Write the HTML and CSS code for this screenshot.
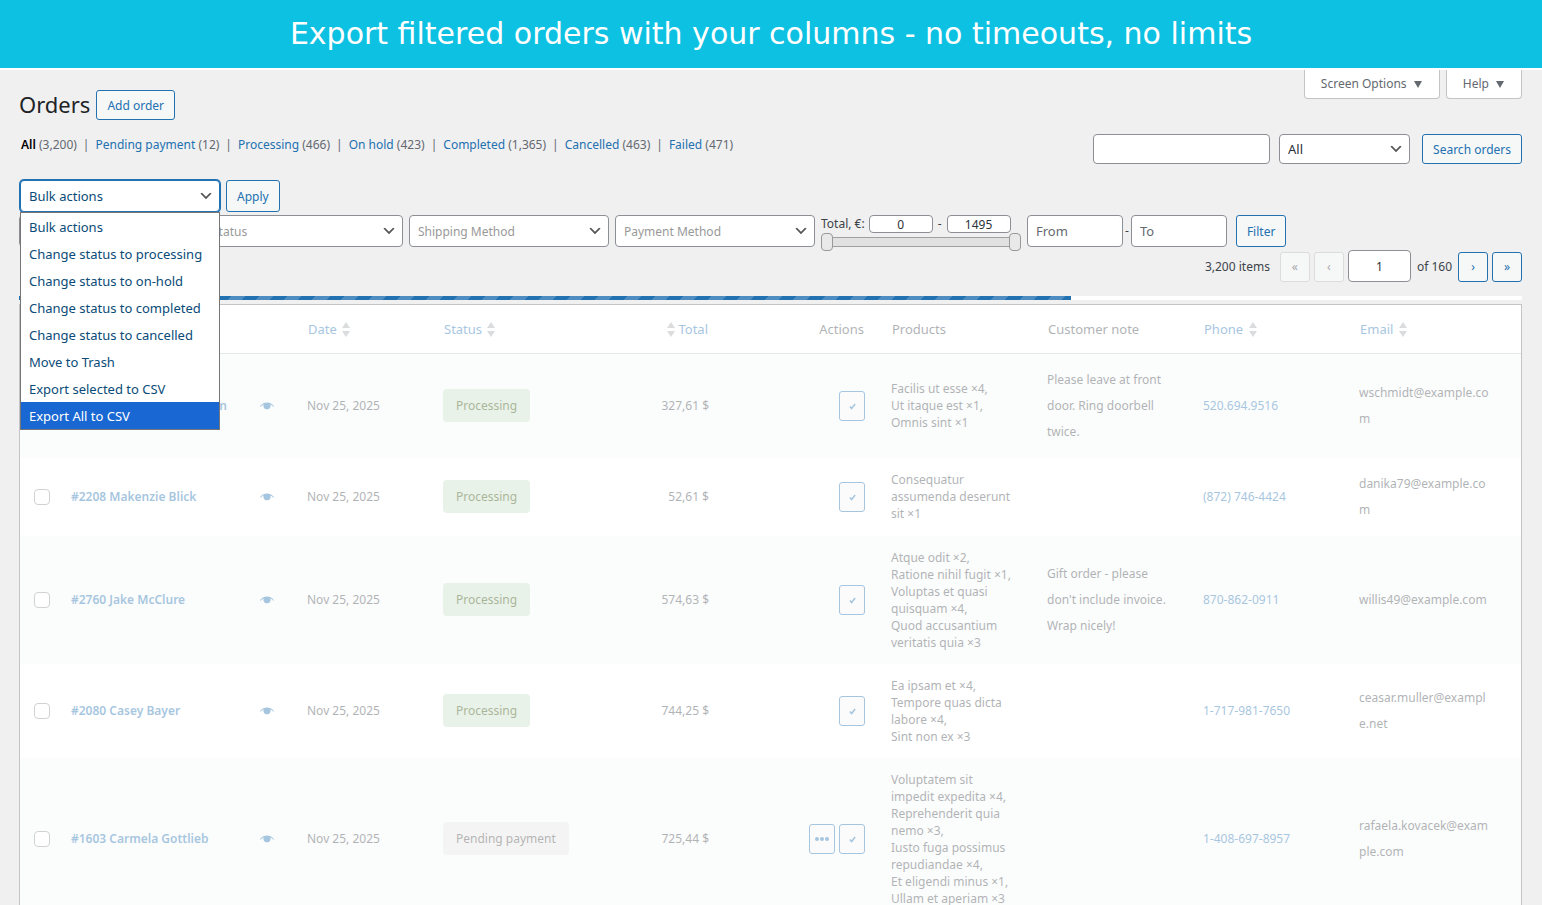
FILE: index.html
```html
<!DOCTYPE html>
<html lang="en">
<head>
    <meta charset="utf-8">
    <title>Orders</title>
    <link rel="stylesheet" href="styles.css">
</head>
<body>
    <svg class="sprite" aria-hidden="true">
        <symbol id="eye" viewBox="0 0 14 8">
            <path d="M0 4.200C2 1.400 4.600.4 7 .4s5 1 7 3.800l-.5.5C12.300 3.500 11.200 2.700 10.200 2.300A3.300 3.300 0 0 1 7 7.200 3.300 3.300 0 0 1 3.800 2.300C2.800 2.700 1.700 3.500.5 4.700z"/>
        </symbol>
        <symbol id="check" viewBox="0 0 8 8">
            <path d="M1 4l2 2.300L7 1.200" fill="none" stroke="currentColor" stroke-width="1.800"/>
        </symbol>
        <symbol id="dots" viewBox="0 0 14 4">
            <circle cx="2" cy="2" r="2"/><circle cx="7" cy="2" r="2"/><circle cx="12" cy="2" r="2"/>
        </symbol>
        <symbol id="sort" viewBox="0 0 8 15">
            <path d="M4 0l4 6H0zM0 9h8l-4 6z"/>
        </symbol>
    </svg>

    <div class="banner">Export filtered orders with your columns - no timeouts, no limits</div>

    <div class="wrap">
        <div class="header">
            <div class="title">
                <h1>Orders</h1>
                <a href="#" class="button">Add order</a>
            </div>
            <div class="screen-meta">
                <button class="meta-link">Screen Options <span class="caret"></span></button>
                <button class="meta-link">Help <span class="caret"></span></button>
            </div>
        </div>

        <div class="subheader">
            <ul class="views">
                <li><a href="#" class="current">All</a> (3,200)</li>
                <li><a href="#">Pending payment</a> (12)</li>
                <li><a href="#">Processing</a> (466)</li>
                <li><a href="#">On hold</a> (423)</li>
                <li><a href="#">Completed</a> (1,365)</li>
                <li><a href="#">Cancelled</a> (463)</li>
                <li><a href="#">Failed</a> (471)</li>
            </ul>
            <div class="search">
                <input type="search" class="search-input" aria-label="Search orders">
                <select class="search-filter" aria-label="Search in"><option>All</option></select>
                <button class="button">Search orders</button>
            </div>
        </div>

        <div class="bulk">
            <div class="bulk-select">
                <select class="open" aria-label="Bulk actions"><option>Bulk actions</option></select>
                <ul class="options" role="listbox">
                    <li role="option">Bulk actions</li>
                    <li role="option">Change status to processing</li>
                    <li role="option">Change status to on-hold</li>
                    <li role="option">Change status to completed</li>
                    <li role="option">Change status to cancelled</li>
                    <li role="option">Move to Trash</li>
                    <li role="option">Export selected to CSV</li>
                    <li role="option" class="selected" aria-selected="true">Export All to CSV</li>
                </ul>
            </div>
            <button class="button tall">Apply</button>
        </div>

        <div class="filters">
            <select class="date-filter" aria-label="Date"><option>All dates</option></select>
            <select class="filter" aria-label="Status"><option>Status</option></select>
            <select class="filter" aria-label="Shipping Method"><option>Shipping Method</option></select>
            <select class="filter" aria-label="Payment Method"><option>Payment Method</option></select>
            <div class="total-filter">
                <div class="total-values">
                    <label for="total-min">Total, €:</label>
                    <input type="text" id="total-min" value="0">
                    <span>-</span>
                    <input type="text" id="total-max" value="1495" aria-label="Maximum total">
                </div>
                <div class="slider">
                    <input type="range" min="0" max="1495" value="0" aria-label="Minimum">
                    <input type="range" min="0" max="1495" value="1495" aria-label="Maximum">
                </div>
            </div>
            <div class="date-range">
                <input type="text" placeholder="From" aria-label="From">
                <span>-</span>
                <input type="text" placeholder="To" aria-label="To">
            </div>
            <button class="button tall">Filter</button>
        </div>

        <div class="pagination">
            <span class="count">3,200 items</span>
            <button class="button page" disabled>«</button>
            <button class="button page" disabled>‹</button>
            <input type="text" class="current-page" value="1" aria-label="Current page">
            <span class="of">of 160</span>
            <button class="button page">›</button>
            <button class="button page">»</button>
        </div>

        <div class="progress"><div class="progress-bar" style="width: 70%"></div></div>

        <div class="table-box">
            <table class="orders">
                <colgroup>
                    <col class="c-check"><col><col class="c-small"><col class="c-wide"><col class="c-small">
                    <col class="c-wide"><col class="c-wide"><col class="c-wide"><col class="c-wide"><col class="c-email">
                </colgroup>
                <thead>
                    <tr>
                        <th><input type="checkbox" aria-label="Select all"></th>
                        <th><a href="#">Order</a></th>
                        <th><a href="#">Date <svg class="sort"><use href="#sort"/></svg></a></th>
                        <th><a href="#">Status <svg class="sort"><use href="#sort"/></svg></a></th>
                        <th class="right"><a href="#"><svg class="sort before"><use href="#sort"/></svg>Total</a></th>
                        <th class="right">Actions</th>
                        <th>Products</th>
                        <th>Customer note</th>
                        <th><a href="#">Phone <svg class="sort"><use href="#sort"/></svg></a></th>
                        <th><a href="#">Email <svg class="sort"><use href="#sort"/></svg></a></th>
                    </tr>
                </thead>
                <tbody>
                    <tr>
                        <td><input type="checkbox" aria-label="Select order"></td>
                        <td><div class="order"><a href="#">#2410 Jacqueline Schuman</a><svg class="eye"><use href="#eye"/></svg></div></td>
                        <td>Nov 25, 2025</td>
                        <td><mark class="status processing">Processing</mark></td>
                        <td class="right">327,61 $</td>
                        <td class="right"><button class="action" aria-label="Complete"><svg class="check"><use href="#check"/></svg></button></td>
                        <td class="products">Facilis ut esse ×4,<br>Ut itaque est ×1,<br>Omnis sint ×1</td>
                        <td>Please leave at front door. Ring doorbell twice.</td>
                        <td><a href="#">520.694.9516</a></td>
                        <td class="email">wschmidt@example.com</td>
                    </tr>
                    <tr>
                        <td><input type="checkbox" aria-label="Select order"></td>
                        <td><div class="order"><a href="#">#2208 Makenzie Blick</a><svg class="eye"><use href="#eye"/></svg></div></td>
                        <td>Nov 25, 2025</td>
                        <td><mark class="status processing">Processing</mark></td>
                        <td class="right">52,61 $</td>
                        <td class="right"><button class="action" aria-label="Complete"><svg class="check"><use href="#check"/></svg></button></td>
                        <td class="products">Consequatur assumenda deserunt sit ×1</td>
                        <td></td>
                        <td><a href="#">(872) 746-4424</a></td>
                        <td class="email">danika79@example.com</td>
                    </tr>
                    <tr>
                        <td><input type="checkbox" aria-label="Select order"></td>
                        <td><div class="order"><a href="#">#2760 Jake McClure</a><svg class="eye"><use href="#eye"/></svg></div></td>
                        <td>Nov 25, 2025</td>
                        <td><mark class="status processing">Processing</mark></td>
                        <td class="right">574,63 $</td>
                        <td class="right"><button class="action" aria-label="Complete"><svg class="check"><use href="#check"/></svg></button></td>
                        <td class="products">Atque odit ×2,<br>Ratione nihil fugit ×1,<br>Voluptas et quasi quisquam ×4,<br>Quod accusantium veritatis quia ×3</td>
                        <td>Gift order - please don't include invoice. Wrap nicely!</td>
                        <td><a href="#">870-862-0911</a></td>
                        <td class="email">willis49@example.com</td>
                    </tr>
                    <tr>
                        <td><input type="checkbox" aria-label="Select order"></td>
                        <td><div class="order"><a href="#">#2080 Casey Bayer</a><svg class="eye"><use href="#eye"/></svg></div></td>
                        <td>Nov 25, 2025</td>
                        <td><mark class="status processing">Processing</mark></td>
                        <td class="right">744,25 $</td>
                        <td class="right"><button class="action" aria-label="Complete"><svg class="check"><use href="#check"/></svg></button></td>
                        <td class="products">Ea ipsam et ×4,<br>Tempore quas dicta labore ×4,<br>Sint non ex ×3</td>
                        <td></td>
                        <td><a href="#">1-717-981-7650</a></td>
                        <td class="email">ceasar.muller@example.net</td>
                    </tr>
                    <tr>
                        <td><input type="checkbox" aria-label="Select order"></td>
                        <td><div class="order"><a href="#">#1603 Carmela Gottlieb</a><svg class="eye"><use href="#eye"/></svg></div></td>
                        <td>Nov 25, 2025</td>
                        <td><mark class="status">Pending payment</mark></td>
                        <td class="right">725,44 $</td>
                        <td class="right"><button class="action" aria-label="Processing"><svg class="dots"><use href="#dots"/></svg></button><button class="action" aria-label="Complete"><svg class="check"><use href="#check"/></svg></button></td>
                        <td class="products">Voluptatem sit impedit expedita ×4,<br>Reprehenderit quia nemo ×3,<br>Iusto fuga possimus repudiandae ×4,<br>Et eligendi minus ×1,<br>Ullam et aperiam ×3</td>
                        <td></td>
                        <td><a href="#">1-408-697-8957</a></td>
                        <td class="email">rafaela.kovacek@example.com</td>
                    </tr>
                </tbody>
            </table>
        </div>
    </div>
</body>
</html>
```

FILE: styles.css
```css
* {
    box-sizing: border-box;
}
body {
    margin: 0;
    height: 100vh;
    overflow: hidden;
    background-color: #f0f0f0;
    color: #3c434a;
    font-family: "Segoe UI", "Noto Sans", sans-serif;
    font-size: 12px;
    line-height: 20px;
}
a {
    color: #2271b1;
    text-decoration: none;
}
ul {
    list-style: none;
    margin: 0;
    padding: 0;
}
svg {
    fill: currentColor;
}
.sprite {
    display: none;
}
input, select, button {
    font-family: inherit;
    font-size: 13px;
    color: #2c3338;
    margin: 0;
}
input[type="text"], input[type="search"], select {
    height: 32px;
    padding: 0 8px;
    background-color: #fff;
    border: 1px solid #8c8f94;
    border-radius: 4px;
}
select {
    appearance: none;
    background: #fff url("data:image/svg+xml,%3Csvg xmlns='http://www.w3.org/2000/svg' viewBox='0 0 20 20'%3E%3Cpath d='M5 6l5 5 5-5 2 1-7 7-7-7 2-1z' fill='%23555'/%3E%3C/svg%3E") no-repeat right 5px center;
    background-size: 16px 16px;
}
.banner {
    background-color: #0dc1e2;
    border-bottom: 2px solid #fff;
    color: #fff;
    font-family: "DejaVu Sans", sans-serif;
    font-size: 30px;
    line-height: 68px;
    text-align: center;
}
.wrap {
    padding: 0 20px 0 19px;
}
.button {
    display: inline-block;
    height: 30px;
    padding: 1px 10px 0;
    background-color: #f6f7f7;
    border: 1px solid #2271b1;
    border-radius: 3px;
    color: #2271b1;
    font-size: 12px;
    line-height: 28px;
    white-space: nowrap;
}
.button.tall {
    height: 32px;
}
.header {
    display: flex;
    justify-content: space-between;
    align-items: flex-start;
}
.title {
    display: flex;
    gap: 6px;
    margin-top: 20px;
}
.title h1 {
    margin: 0;
    color: #1d2327;
    font-size: 22px;
    font-weight: 400;
    line-height: 28px;
}
.screen-meta {
    display: flex;
    gap: 6px;
}
.meta-link {
    height: 29px;
    padding: 0 17px 2px 16px;
    background-color: #fff;
    border: 1px solid #c3c4c7;
    border-top: none;
    border-radius: 0 0 4px 4px;
    color: #646970;
    font-size: 12px;
}
.caret {
    display: inline-block;
    margin-left: 4px;
    border: 4px solid transparent;
    border-top: 7px solid #646970;
    border-bottom: none;
}
.subheader {
    display: flex;
    justify-content: space-between;
    margin-top: 14px;
}
.views {
    display: flex;
    padding: 1px 0 0 2px;
    color: #646970;
}
.views li + li::before {
    content: "|";
    margin: 0 6px;
}
.views .current {
    color: #000;
    font-weight: 600;
}
.search {
    display: flex;
}
.search input, .search select {
    height: 30px;
    margin-right: 9px;
}
.search-input {
    width: 177px;
}
.search .search-filter {
    width: 131px;
    margin-right: 12px;
}
.bulk {
    display: flex;
    gap: 5px;
    margin-top: 16px;
}
.bulk-select {
    position: relative;
    width: 200px;
    margin: 0 1px;
}
.bulk-select .open {
    width: 100%;
    color: #0a4b78;
    border-color: #2271b1;
    box-shadow: 0 0 0 1px #2271b1;
}
.options {
    position: absolute;
    z-index: 1;
    top: 32px;
    left: 0;
    right: 0;
    background-color: #fff;
    border: 1px solid #767676;
    color: #0a4b78;
    font-size: 13px;
}
.options li {
    padding: 2px 8px 0;
    line-height: 25px;
    white-space: nowrap;
}
.options .selected {
    background-color: #1967d2;
    color: #fff;
}
.filters {
    display: flex;
    gap: 6px;
    height: 32px;
    margin-top: 3px;
}
.filters select {
    color: #999;
    font-size: 12px;
}
.date-filter {
    width: 178px;
}
.filter {
    width: 200px;
}
.total-filter {
    width: 200px;
}
.total-values {
    display: flex;
    align-items: center;
    gap: 4px;
    height: 18px;
    white-space: nowrap;
}
.total-values span {
    padding: 0 1px;
}
.total-values input[type="text"] {
    width: 64px;
    height: 18px;
    padding: 0;
    font-size: 12px;
    text-align: center;
}
.slider {
    position: relative;
    height: 18px;
    background: linear-gradient(#a0a0a0 1px, #e1e1e1 1px 9px, #a0a0a0 9px) no-repeat center / 196px 10px;
}
.slider input {
    position: absolute;
    inset: 0;
    width: 100%;
    height: 18px;
    appearance: none;
    background: none;
    pointer-events: none;
}
.slider input::-webkit-slider-thumb {
    appearance: none;
    width: 12px;
    height: 18px;
    background-color: #e9e9e9;
    border: 1px solid #999;
    border-radius: 4px;
    pointer-events: auto;
}
.date-range {
    display: flex;
    align-items: center;
    gap: 2px;
    margin-right: 3px;
}
.date-range input {
    width: 96px;
}
.date-range input::placeholder {
    color: #646970;
}
.pagination {
    display: flex;
    justify-content: flex-end;
    align-items: flex-end;
    gap: 4px;
    margin-top: 3px;
}
.pagination span {
    line-height: 30px;
}
.count {
    margin-right: 6px;
}
.of {
    margin: 0 2px;
}
.page {
    width: 30px;
    padding: 0;
}
.page:disabled {
    border-color: #dcdcde;
    color: #a7aaad;
}
.pagination .current-page {
    width: 63px;
    font-size: 12px;
    text-align: center;
}
.progress {
    height: 4px;
    margin-top: 14px;
    background-color: #fff;
}
.progress-bar {
    height: 100%;
    background: repeating-linear-gradient(135deg, #2271b1 0 10px, #4e8dc1 10px 20px);
}
.table-box {
    margin-top: 4px;
    background-color: #fff;
    border: 1px solid #c3c4c7;
}
.orders {
    width: 100%;
    table-layout: fixed;
    border-collapse: collapse;
    opacity: 0.4;
    line-height: 26px;
}
.c-check {
    width: 38px;
}
.c-small {
    width: 136px;
}
.c-wide {
    width: 156px;
}
.c-email {
    width: 175px;
}
.orders th {
    height: 48px;
    padding: 0 14px;
    border-bottom: 1px solid #c3c4c7;
    font-size: 13px;
    font-weight: 400;
    text-align: left;
}
.orders td {
    padding: 13px;
    vertical-align: middle;
}
.orders td:first-child {
    padding: 0 0 0 14px;
}
.orders tbody tr:nth-child(odd) {
    background-color: #f6f9f8;
}
.orders .right {
    text-align: right;
}
.orders .products {
    padding-right: 20px;
    line-height: 17px;
}
.orders .email {
    padding-right: 30px;
    overflow-wrap: anywhere;
}
.orders input[type="checkbox"] {
    appearance: none;
    display: block;
    width: 16px;
    height: 16px;
    background-color: #fff;
    border: 1px solid #8c8f94;
    border-radius: 4px;
}
.order {
    display: flex;
    justify-content: space-between;
    align-items: center;
    padding-right: 7px;
    white-space: nowrap;
}
.order a {
    font-weight: 600;
}
.eye {
    width: 14px;
    height: 8px;
    color: #2271b1;
}
.sort {
    width: 8px;
    height: 15px;
    margin-left: 2px;
    color: #a7aaad;
    vertical-align: -3px;
}
.sort.before {
    margin: 0 3px 0 0;
}
.status {
    display: inline-block;
    padding: 0 13px;
    background-color: #e5e5e5;
    border-radius: 4px;
    color: #454545;
    line-height: 33px;
    vertical-align: middle;
}
.status.processing {
    background-color: #c6e1c6;
    color: #2c4700;
}
.action {
    width: 26px;
    height: 30px;
    margin-left: 4px;
    padding: 0 0 2px;
    background-color: #f6f7f7;
    border: 1px solid #2271b1;
    border-radius: 3px;
    color: #2271b1;
    line-height: 26px;
    vertical-align: middle;
}
.check {
    width: 7px;
    height: 7px;
}
.dots {
    width: 14px;
    height: 4px;
    vertical-align: middle;
}
```
